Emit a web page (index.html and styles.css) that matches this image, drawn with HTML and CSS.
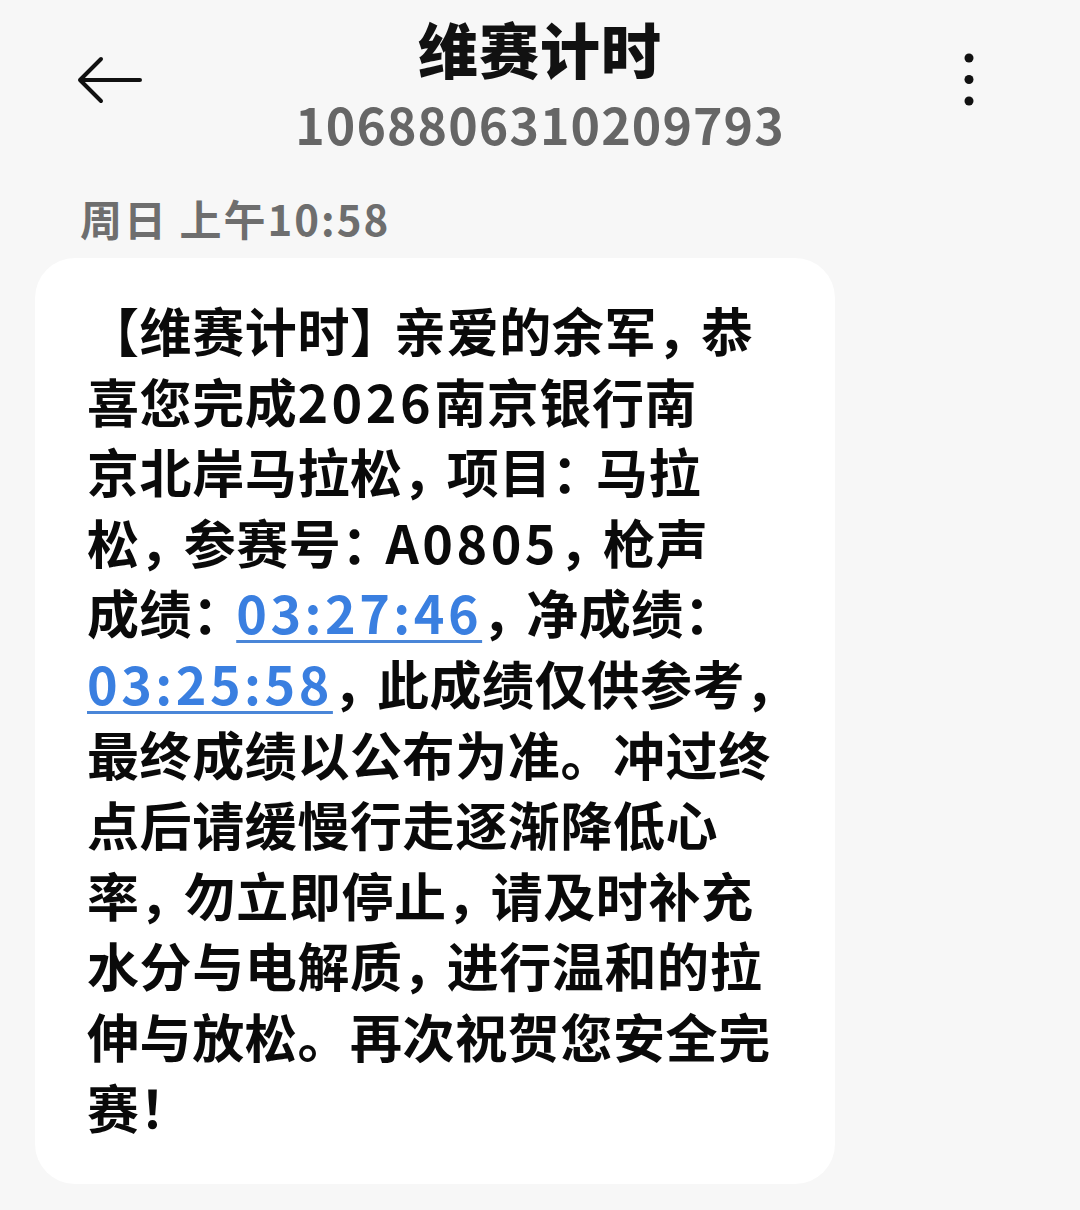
FILE: index.html
```html
<!DOCTYPE html>
<html lang="zh-CN">
<head>
  <meta charset="UTF-8">
  <meta name="viewport" content="width=device-width, initial-scale=1">
  <title>维赛计时</title>
  <link rel="stylesheet" href="styles.css">
</head>
<body>
  <!-- Conversation header -->
  <div class="header">
    <div class="back">
      <svg width="66" height="48" viewBox="0 0 66 48">
        <path d="M63 24 H3 M24 3 L3 24 L24 45" fill="none" stroke="#111" stroke-width="4" stroke-linecap="round" stroke-linejoin="round"/>
      </svg>
    </div>
    <div class="contact">
      <div class="contact-name">维赛计时</div>
      <div class="contact-number">1068806310209793</div>
    </div>
    <div class="menu">
      <svg width="12" height="56" viewBox="0 0 12 56">
        <circle cx="6" cy="6" r="4.5" fill="#111"/>
        <circle cx="6" cy="27.5" r="4.5" fill="#111"/>
        <circle cx="6" cy="49" r="4.5" fill="#111"/>
      </svg>
    </div>
  </div>

  <!-- Message list -->
  <div class="time">周日 上午10:58</div>

  <div class="bubble">
    <p class="message">【维赛计时<span class="p">】</span>亲爱的余军<span class="p">，</span>恭<br>喜您完成<span class="num">2026</span>南京银行南<br>京北岸马拉松<span class="p">，</span>项目<span class="p">：</span>马拉<br>松<span class="p">，</span>参赛号<span class="p">：</span><span class="num">A0805</span><span class="p">，</span>枪声<br>成绩<span class="p">：</span><a class="num link">03:27:46</a><span class="p">，</span>净成绩<span class="p">：</span><br><a class="num link">03:25:58</a><span class="p">，</span>此成绩仅供参考<span class="p">，</span><br>最终成绩以公布为准。冲过终<br>点后请缓慢行走逐渐降低心<br>率<span class="p">，</span>勿立即停止<span class="p">，</span>请及时补充<br>水分与电解质<span class="p">，</span>进行温和的拉<br>伸与放松。再次祝贺您安全完<br>赛！</p>
  </div>
</body>
</html>
```

FILE: styles.css
```css
body {
  margin: 0;
  background-color: #f7f7f7;
  font-family: "Noto Sans CJK SC", "Noto Sans", sans-serif;
  color: #111;
}
.header {
  display: grid;
  grid-template-columns: 1fr auto 1fr;
  align-items: start;
  padding-top: 13px;
}
.back {
  padding-top: 43px;
  padding-left: 77px;
}
.back svg,
.menu svg {
  display: block;
}
.menu {
  justify-self: end;
  padding-top: 39px;
  padding-right: 105px;
}
.contact {
  text-align: center;
}
.contact-name {
  font-size: 60px;
  line-height: 70px;
  font-weight: 900;
  letter-spacing: 1px;
}
.contact-number {
  margin-top: 10px;
  font-size: 50px;
  line-height: 60px;
  font-weight: 700;
  color: #666;
  letter-spacing: 1.1px;
}
.time {
  margin-top: 40px;
  padding-left: 80px;
  font-size: 42px;
  line-height: 50px;
  font-weight: 700;
  color: #6e6e6e;
  letter-spacing: 2px;
}
.bubble {
  width: 800px;
  box-sizing: border-box;
  margin: 15px 0 0 35px;
  padding: 37px 40px 42px 52px;
  background-color: #fff;
  border-radius: 40px;
}
.message {
  margin: 0;
  font-size: 52px;
  line-height: 70.6px;
  font-weight: 700;
  letter-spacing: 0.6px;
  white-space: nowrap;
  color: #0a0a0a;
}
.p {
  letter-spacing: -8px;
}
.num {
  letter-spacing: 3.5px;
}
.link {
  color: #3a7fe0;
  text-decoration: underline;
  text-decoration-color: #4a86d8;
  text-decoration-thickness: 3px;
  text-underline-offset: 6px;
}
```
